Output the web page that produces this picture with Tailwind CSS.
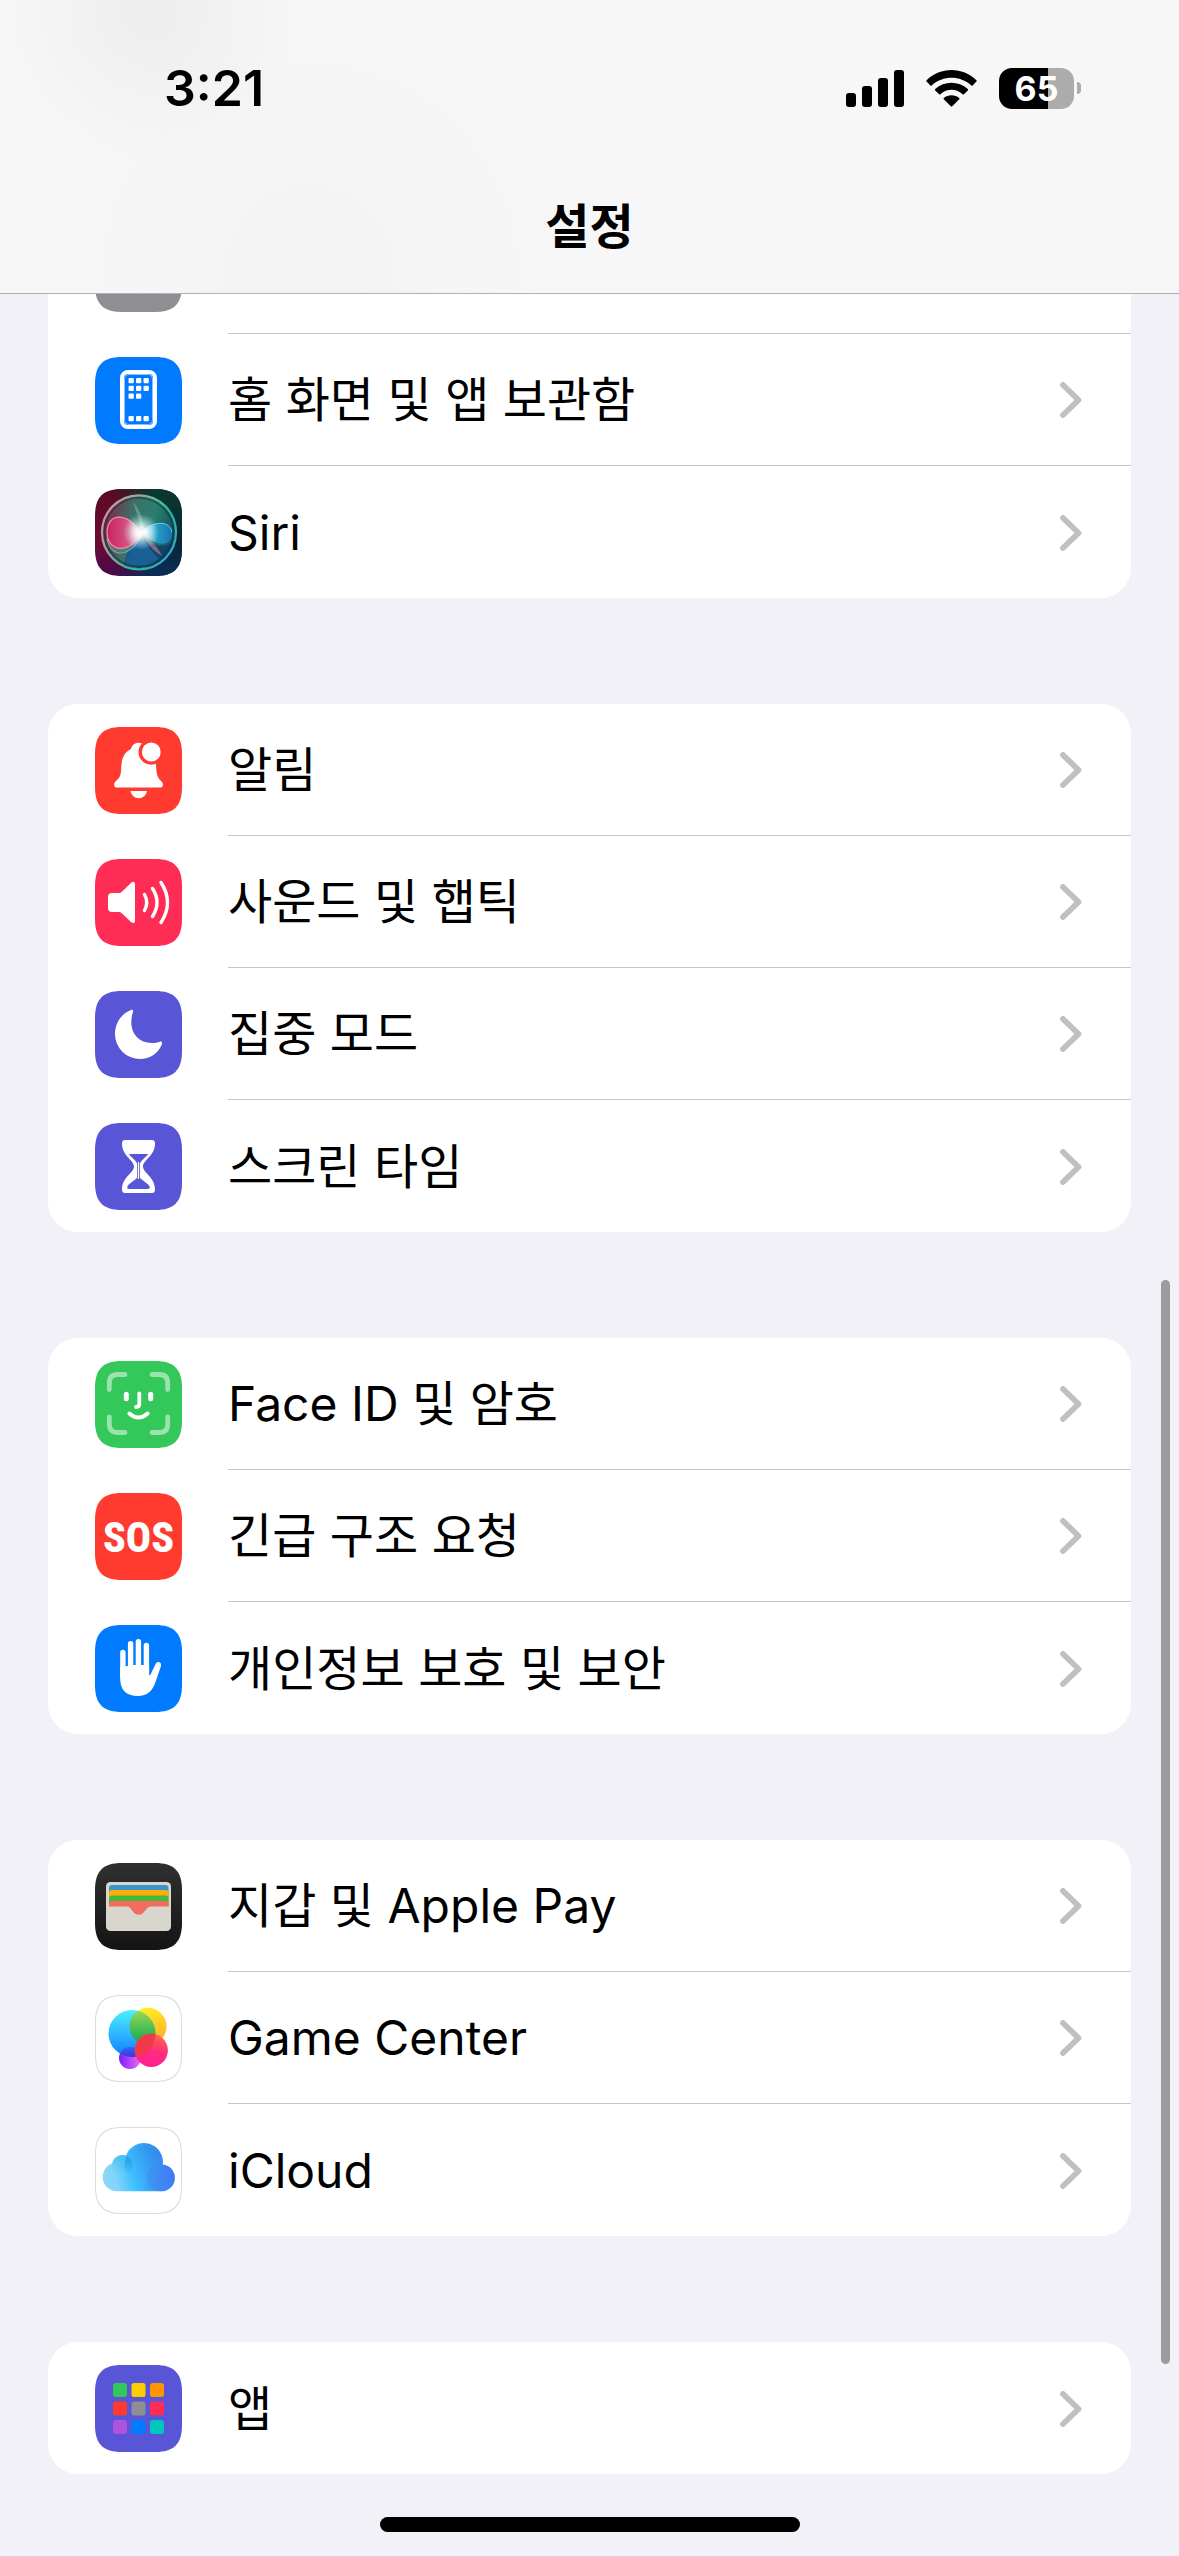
<!DOCTYPE html>
<html lang="ko">

<head>
  <meta charset="UTF-8">
  <meta name="viewport" content="width=device-width, initial-scale=1.0">
  <title>설정</title>
  <script src="https://cdn.jsdelivr.net/npm/@tailwindcss/browser@4"></script>
</head>

<body class="bg-[#f2f1f7] text-black font-['Inter','Noto_Sans_CJK_KR',sans-serif]">

  <!-- shared shapes -->
  <svg class="hidden">
    <symbol id="chevron" viewBox="0 0 22 36">
      <path d="M3 3 L18.5 18 L3 33" fill="none" stroke="#c0c0c2" stroke-width="5.8" stroke-linecap="round" stroke-linejoin="round" />
    </symbol>
    <symbol id="tile" viewBox="0 0 87 87">
      <path d="M27 0 H60 C79 0 87 8 87 27 V60 C87 79 79 87 60 87 H27 C8 87 0 79 0 60 V27 C0 8 8 0 27 0Z" />
    </symbol>
  </svg>

  <header class="sticky top-0 z-10 h-[294px] border-b border-[#b2b2b4] bg-[#f7f7f7] bg-[radial-gradient(circle_at_150px_10px,#ededed,transparent_150px),radial-gradient(circle_at_310px_270px,#f3f3f3,transparent_280px)]">
    <div class="flex items-center justify-between pl-[164px] pr-[98px] pt-[56px]">
      <time class="text-[50px] leading-[64px] font-semibold">3:21</time>
      <div class="flex items-center gap-[22px]">
        <svg class="w-[58px] h-[37px]" viewBox="0 0 58 37">
          <rect x="0" y="23" width="10" height="14" rx="3" />
          <rect x="16" y="16" width="10" height="21" rx="3" />
          <rect x="32" y="8" width="10" height="29" rx="3" />
          <rect x="48" y="0" width="10" height="37" rx="3" />
        </svg>
        <svg class="w-[51px] h-[37px]" viewBox="0 0 51 37">
          <path d="M0.6 10.2 C14.5 -3.4 36.5 -3.4 50.4 10.2 Q51 10.9 50.4 11.6 L46.6 15.4 Q46 16 45.3 15.4 C34 5.2 17 5.2 5.7 15.4 Q5 16 4.4 15.4 L0.6 11.6 Q0 10.9 0.6 10.2Z" />
          <path d="M9.2 19 C18.5 10.6 32.5 10.6 41.8 19 Q42.4 19.7 41.8 20.4 L37.9 24.2 Q37.3 24.8 36.6 24.2 C30 18.4 21 18.4 14.4 24.2 Q13.7 24.8 13.1 24.2 L9.2 20.4 Q8.6 19.7 9.2 19Z" />
          <path d="M17.8 27.9 C22.2 24.3 28.8 24.3 33.2 27.9 Q33.9 28.6 33.2 29.3 L26.2 36.3 Q25.5 37 24.8 36.3 L17.8 29.3 Q17.1 28.6 17.8 27.9Z" />
        </svg>
        <div class="flex items-center gap-[3px]">
          <div class="w-[75px] h-[41px] rounded-[13px] bg-[linear-gradient(to_right,#000_65%,#acacac_65%)] text-center text-[34px] leading-[41px] font-bold text-white">65</div>
          <div class="w-1 h-3 rounded-r-full bg-[#acacac]"></div>
        </div>
      </div>
    </div>
    <h1 class="mt-[77px] text-center text-[48px] leading-[60px] font-semibold">설정</h1>
  </header>

  <main class="px-12 space-y-[106px] text-[48px] leading-[60px]">

    <ul class="rounded-b-[30px] bg-white">
      <!-- row that is scrolled under the header -->
      <li class="flex h-10 items-end overflow-hidden pl-[47px]">
        <svg class="mb-[22px] size-[87px] shrink-0 fill-[#8e8e93]" viewBox="0 0 87 87"><use href="#tile" /></svg>
        <span class="ml-[46px] h-10 flex-1 border-b border-[#c6c6c8]"></span>
      </li>
      <li>
        <a href="#" class="flex h-[132px] pl-[47px]">
          <svg class="mt-[23px] size-[87px] shrink-0" viewBox="0 0 87 87">
            <use href="#tile" fill="#007aff" />
            <rect x="27" y="15" width="33" height="55" rx="6" fill="none" stroke="#fff" stroke-width="4" />
            <rect x="29.5" y="17.5" width="28" height="50" rx="4" fill="none" stroke="#8cc3ff" stroke-width="1" />
            <g fill="#fff">
              <rect x="33.5" y="21" width="5.3" height="5.3" rx="1" />
              <rect x="41" y="21" width="5.3" height="5.3" rx="1" />
              <rect x="48.5" y="21" width="5.3" height="5.3" rx="1" />
              <rect x="33.5" y="28.7" width="5.3" height="5.3" rx="1" />
              <rect x="41" y="28.7" width="5.3" height="5.3" rx="1" />
              <rect x="48.5" y="28.7" width="5.3" height="5.3" rx="1" />
              <rect x="33.5" y="36.4" width="5.3" height="5.3" rx="1" />
              <rect x="41" y="36.4" width="5.3" height="5.3" rx="1" />
              <rect x="33.5" y="59" width="5.3" height="5.3" rx="1" />
              <rect x="41" y="59" width="5.3" height="5.3" rx="1" />
              <rect x="48.5" y="59" width="5.3" height="5.3" rx="1" />
            </g>
          </svg>
          <span class="ml-[46px] flex flex-1 items-center justify-between border-b border-[#c6c6c8] pt-px pr-[49px]">
            홈 화면 및 앱 보관함
            <svg class="w-[22px] h-9"><use href="#chevron" /></svg>
          </span>
        </a>
      </li>
      <li>
        <a href="#" class="flex h-[132px] pl-[47px]">
          <svg class="mt-[23px] size-[87px] shrink-0" viewBox="0 0 87 87">
            <defs>
              <linearGradient id="siriLeft" x1="0" y1="0" x2="0" y2="1">
                <stop offset="0" stop-color="#5a0a24" />
                <stop offset=".6" stop-color="#6d0a35" />
                <stop offset="1" stop-color="#4a0a4c" />
              </linearGradient>
              <linearGradient id="siriRight" x1="0" y1="0" x2="0" y2="1">
                <stop offset="0" stop-color="#0a3a30" />
                <stop offset=".55" stop-color="#07272f" />
                <stop offset="1" stop-color="#0a2d58" />
              </linearGradient>
              <linearGradient id="siriFade" x1="0" y1="0" x2="1" y2="0">
                <stop offset=".2" stop-color="#000" />
                <stop offset=".65" stop-color="#fff" />
              </linearGradient>
              <mask id="siriMask"><rect width="87" height="87" fill="url(#siriFade)" /></mask>
              <linearGradient id="siriOrb" x1="0" y1=".4" x2="1" y2=".6">
                <stop offset="0" stop-color="#7d2a45" />
                <stop offset=".35" stop-color="#3d6f68" />
                <stop offset=".65" stop-color="#2c7f70" />
                <stop offset="1" stop-color="#0f5058" />
              </linearGradient>
              <linearGradient id="siriRing" x1="0" y1=".2" x2="1" y2=".8">
                <stop offset="0" stop-color="#d8929c" />
                <stop offset=".45" stop-color="#6cb8a0" />
                <stop offset=".7" stop-color="#25b99a" />
                <stop offset="1" stop-color="#3aa5e0" />
              </linearGradient>
              <linearGradient id="siriPink" x1="0" y1="0" x2="1" y2="0">
                <stop offset="0" stop-color="#cf1f5f" />
                <stop offset=".6" stop-color="#e3507f" />
                <stop offset="1" stop-color="#fff" />
              </linearGradient>
              <linearGradient id="siriBlue" x1="0" y1="0" x2="1" y2="0">
                <stop offset="0" stop-color="#d8ffff" />
                <stop offset=".5" stop-color="#259fce" />
                <stop offset="1" stop-color="#1878c4" />
              </linearGradient>
              <radialGradient id="siriGlow">
                <stop offset="0" stop-color="#fff" />
                <stop offset=".28" stop-color="#fff" stop-opacity=".85" />
                <stop offset="1" stop-color="#bff" stop-opacity="0" />
              </radialGradient>
            </defs>
            <use href="#tile" fill="url(#siriLeft)" />
            <g mask="url(#siriMask)"><use href="#tile" fill="url(#siriRight)" /></g>
            <circle cx="44" cy="43.3" r="36" fill="url(#siriOrb)" />
            <path d="M46 46 C36 54 32 64 29 75 A35 35 0 0 0 78 54 C66 60 56 56 46 46Z" fill="#0e3a70" opacity=".75" />
            <path d="M46 44 C38 56 32 64 30 75 C44 80 58 76 64 70 C56 62 50 54 46 44Z" fill="#1b70ad" opacity=".6" />
            <path d="M46 44 C36 24 14 22 12 44 C11 66 34 72 48 45Z" fill="#5fb0a8" opacity=".35" />
            <path d="M46 44 C34 25 12 20 12 44 C12 63 34 66 48 45Z" fill="url(#siriPink)" opacity=".92" />
            <path d="M46 44 C34 24 13 22 12 43 C12 63 34 66 47 45" fill="none" stroke="#ff86aa" stroke-width="1.2" />
            <path d="M12 50 C16 69 34 70 48 45" fill="none" stroke="#8fc4cf" stroke-width="1.2" opacity=".7" />
            <path d="M47 43 C56 33 74 30 77 43 C78 59 60 58 47 44Z" fill="url(#siriBlue)" opacity=".9" />
            <path d="M47 43 C56 33 74 30 77 43" fill="none" stroke="#5fd8e8" stroke-width="1" />
            <path d="M47 44 C54 50 62 56 67 67 C58 62 52 54 47 44Z" fill="#d4879c" opacity=".55" />
            <path d="M38 13 C46 22 50 34 48 44 C44 34 42 24 38 13Z" fill="#bfe8dc" opacity=".3" />
            <circle cx="44" cy="43.3" r="34.5" fill="none" stroke="#082c30" stroke-width="2" opacity=".45" />
            <circle cx="44" cy="43.3" r="37" fill="none" stroke="url(#siriRing)" stroke-width="2.2" />
            <circle cx="46" cy="43" r="18" fill="url(#siriGlow)" />
          </svg>
          <span class="ml-[46px] flex flex-1 items-center justify-between pt-px pr-[49px]">
            Siri
            <svg class="w-[22px] h-9"><use href="#chevron" /></svg>
          </span>
        </a>
      </li>
    </ul>

    <ul class="rounded-[30px] bg-white">
      <li>
        <a href="#" class="flex h-[132px] pl-[47px]">
          <svg class="mt-[23px] size-[87px] shrink-0" viewBox="0 0 87 87">
            <use href="#tile" fill="#ff3b30" />
            <path d="M22 60.6 C19 60.6 18 57 20.5 54.5 C24 51 25.5 50 26 44 C26.5 33 27.5 26 36 22 C37 18 40 15.8 43.5 15.8 C46 15.8 49 17 51 20 L61 37 C61.3 48 62.5 50.5 66.5 54.5 C69 57 68 60.6 65 60.6Z" fill="#fff" />
            <circle cx="56.3" cy="25" r="12.8" fill="#ff3b30" />
            <circle cx="56.3" cy="25" r="9.4" fill="#fff" />
            <path d="M35.5 64 H52 C51 68.5 48 71.2 43.7 71.2 C39.5 71.2 36.5 68.5 35.5 64Z" fill="#fff" />
          </svg>
          <span class="ml-[46px] flex flex-1 items-center justify-between border-b border-[#c6c6c8] pt-px pr-[49px]">
            알림
            <svg class="w-[22px] h-9"><use href="#chevron" /></svg>
          </span>
        </a>
      </li>
      <li>
        <a href="#" class="flex h-[132px] pl-[47px]">
          <svg class="mt-[23px] size-[87px] shrink-0" viewBox="0 0 87 87">
            <use href="#tile" fill="#ff2d55" />
            <path d="M17 34 H24 Q25.5 34 26.5 33 L36 24 Q38 22.4 39 23 Q40 23.5 40 25 V62 Q40 63.5 39 64 Q38 64.4 36 63 L26.5 54 Q25.5 53 24 53 H17 Q13 53 13 49 V38 Q13 34 17 34Z" fill="#fff" />
            <path d="M49.5 35.5 Q54 43.5 49.5 51.5 M57.5 29.5 Q66.5 43.5 57.5 57.5 M66 23.5 Q79 43.5 66 63.5" fill="none" stroke="#fff" stroke-width="3.4" stroke-linecap="round" />
          </svg>
          <span class="ml-[46px] flex flex-1 items-center justify-between border-b border-[#c6c6c8] pt-px pr-[49px]">
            사운드 및 햅틱
            <svg class="w-[22px] h-9"><use href="#chevron" /></svg>
          </span>
        </a>
      </li>
      <li>
        <a href="#" class="flex h-[132px] pl-[47px]">
          <svg class="mt-[23px] size-[87px] shrink-0" viewBox="0 0 87 87">
            <use href="#tile" fill="#5856d6" />
            <path d="M36 19 C37.5 18.5 38.5 19.5 38 21 C32.5 38 41 52 57 52 C60 52 62.5 51.5 65 50.7 C66.5 50.3 67.5 51.5 67 53 C63.5 62 55 68 45 68 A25 25 0 0 1 20 43 C20 32 26.5 22.5 36 19Z" fill="#fff" />
          </svg>
          <span class="ml-[46px] flex flex-1 items-center justify-between border-b border-[#c6c6c8] pt-px pr-[49px]">
            집중 모드
            <svg class="w-[22px] h-9"><use href="#chevron" /></svg>
          </span>
        </a>
      </li>
      <li>
        <a href="#" class="flex h-[132px] pl-[47px]">
          <svg class="mt-[23px] size-[87px] shrink-0" viewBox="0 0 87 87">
            <use href="#tile" fill="#5856d6" />
            <path d="M30 17 H57 Q60 17 60 20.5 C60 33 48 37 48 43.5 C48 50 60 54 60 66.5 Q60 70 57 70 H30 Q27 70 27 66.5 C27 54 39 50 39 43.5 C39 37 27 33 27 20.5 Q27 17 30 17Z" fill="#fff" />
            <path d="M34 31 H53 C50.5 35 46 37 44.9 41 V54.5 C46 57 53.5 60 54.8 64 Q55 66 53 66 H34 Q32 66 32.2 64 C33.5 60 41 57 42.1 54.5 V41 C41 37 36.5 35 34 31Z" fill="#5856d6" />
            <path d="M43.5 39 V56" stroke="#fff" stroke-width="1.2" />
          </svg>
          <span class="ml-[46px] flex flex-1 items-center justify-between pt-px pr-[49px]">
            스크린 타임
            <svg class="w-[22px] h-9"><use href="#chevron" /></svg>
          </span>
        </a>
      </li>
    </ul>

    <ul class="rounded-[30px] bg-white">
      <li>
        <a href="#" class="flex h-[132px] pl-[47px]">
          <svg class="mt-[23px] size-[87px] shrink-0" viewBox="0 0 87 87">
            <use href="#tile" fill="#34c759" />
            <path d="M14.3 28.5 V22 Q14.3 13.5 22.5 13.5 H30 M57 13.5 H64.5 Q72.7 13.5 72.7 22 V28.5 M72.7 56 V63 Q72.7 71.5 64.5 71.5 H57 M30 71.5 H22.5 Q14.3 71.5 14.3 63 V56" fill="none" stroke="#9ae3ac" stroke-width="4.8" stroke-linecap="round" />
            <path d="M31.3 33.3 V37.7 M55.7 33.3 V37.7" stroke="#fff" stroke-width="5" stroke-linecap="round" />
            <path d="M44.3 32.5 V43 Q44.3 46 41 46 M34.3 52.5 Q43.5 60.5 52.7 52.5" fill="none" stroke="#fff" stroke-width="3.8" stroke-linecap="round" />
          </svg>
          <span class="ml-[46px] flex flex-1 items-center justify-between border-b border-[#c6c6c8] pt-px pr-[49px]">
            Face ID 및 암호
            <svg class="w-[22px] h-9"><use href="#chevron" /></svg>
          </span>
        </a>
      </li>
      <li>
        <a href="#" class="flex h-[132px] pl-[47px]">
          <svg class="mt-[23px] size-[87px] shrink-0" viewBox="0 0 87 87">
            <use href="#tile" fill="#ff3b30" />
            <text x="43.5" y="59" text-anchor="middle" fill="#fff" class="font-['Liberation_Sans_Narrow','Roboto_Condensed','Roboto',sans-serif] text-[42px] font-extrabold">SOS</text>
          </svg>
          <span class="ml-[46px] flex flex-1 items-center justify-between border-b border-[#c6c6c8] pt-px pr-[49px]">
            긴급 구조 요청
            <svg class="w-[22px] h-9"><use href="#chevron" /></svg>
          </span>
        </a>
      </li>
      <li>
        <a href="#" class="flex h-[132px] pl-[47px]">
          <svg class="mt-[23px] size-[87px] shrink-0" viewBox="0 0 87 87">
            <use href="#tile" fill="#007aff" />
            <g fill="#fff">
              <rect x="25.2" y="24.8" width="5.4" height="30" rx="2.7" />
              <rect x="32.9" y="16" width="5.4" height="38" rx="2.7" />
              <rect x="40.7" y="14" width="5.4" height="38" rx="2.7" />
              <rect x="48.7" y="17.8" width="5.4" height="36" rx="2.7" />
              <path d="M25.2 42 L32.9 41 L38.3 40 H48.7 L54.1 41 V50.5 L55.3 50 L60.8 38.5 C62.5 35.5 67 37 66 41 L60.5 57 C57.5 66 52 71 43 71 C31 71 25.2 64.5 25.2 54Z" />
            </g>
          </svg>
          <span class="ml-[46px] flex flex-1 items-center justify-between pt-px pr-[49px]">
            개인정보 보호 및 보안
            <svg class="w-[22px] h-9"><use href="#chevron" /></svg>
          </span>
        </a>
      </li>
    </ul>

    <ul class="rounded-[30px] bg-white">
      <li>
        <a href="#" class="flex h-[132px] pl-[47px]">
          <svg class="mt-[23px] size-[87px] shrink-0" viewBox="0 0 87 87">
            <defs>
              <linearGradient id="walletBg" x1="0" y1="0" x2="0" y2="1">
                <stop offset="0" stop-color="#303030" />
                <stop offset="1" stop-color="#141414" />
              </linearGradient>
            </defs>
            <use href="#tile" fill="url(#walletBg)" />
            <rect x="11" y="19" width="65" height="49" rx="4.5" fill="#d9d6cd" />
            <path d="M14 25 Q14 22 17 22 H70.5 Q73.5 22 73.5 25 V43 H14Z" fill="#3a96c9" />
            <path d="M14 30 Q14 27 17 27 H70.5 Q73.5 27 73.5 30 V43 H14Z" fill="#ffad0a" />
            <path d="M14 35.5 Q14 32.6 17 32.6 H70.5 Q73.5 32.6 73.5 35.5 V43 H14Z" fill="#48b839" />
            <path d="M14 41 Q14 38 17 38 H70.5 Q73.5 38 73.5 41 V43.5 H56 C50.5 43.5 50 51.8 43.7 51.8 C37.5 51.8 37 43.5 31.5 43.5 H14Z" fill="#f26d5f" />
          </svg>
          <span class="ml-[46px] flex flex-1 items-center justify-between border-b border-[#c6c6c8] pt-px pr-[49px]">
            지갑 및 Apple Pay
            <svg class="w-[22px] h-9"><use href="#chevron" /></svg>
          </span>
        </a>
      </li>
      <li>
        <a href="#" class="flex h-[132px] pl-[47px]">
          <svg class="mt-[23px] size-[87px] shrink-0" viewBox="0 0 87 87">
            <defs>
              <linearGradient id="gcBlue" x1="0" y1="0" x2="0" y2="1">
                <stop offset="0" stop-color="#4df0ff" />
                <stop offset="1" stop-color="#0f7dff" />
              </linearGradient>
              <linearGradient id="gcYellow" x1="0" y1="0" x2=".3" y2="1">
                <stop offset="0" stop-color="#fff81f" />
                <stop offset="1" stop-color="#ffb02a" />
              </linearGradient>
              <linearGradient id="gcGreen" x1="0" y1="0" x2="0" y2="1">
                <stop offset="0" stop-color="#a5dd55" />
                <stop offset="1" stop-color="#0aa550" />
              </linearGradient>
              <linearGradient id="gcRed" x1=".6" y1="0" x2=".4" y2="1">
                <stop offset="0" stop-color="#ff6a4d" />
                <stop offset=".5" stop-color="#ff2c79" />
                <stop offset="1" stop-color="#ff1f96" />
              </linearGradient>
              <linearGradient id="gcPurple" x1="0" y1="0" x2="1" y2="0">
                <stop offset="0" stop-color="#7a1fff" />
                <stop offset="1" stop-color="#ef6bf0" />
              </linearGradient>
              <linearGradient id="gcIndigo" x1="0" y1="0" x2="0" y2="1">
                <stop offset="0" stop-color="#2f66f5" />
                <stop offset=".5" stop-color="#4a2ad8" />
              </linearGradient>
              <clipPath id="gcBlueClip"><circle cx="37" cy="38.5" r="23.5" /></clipPath>
            </defs>
            <use href="#tile" fill="#dcdcdd" />
            <path d="M27 1 H60 C78 1 86 9 86 27 V60 C86 78 78 86 60 86 H27 C9 86 1 78 1 60 V27 C1 9 9 1 27 1Z" fill="#fff" />
            <circle cx="53" cy="31.3" r="18.5" fill="url(#gcYellow)" />
            <circle cx="35" cy="63" r="11" fill="url(#gcPurple)" />
            <circle cx="37" cy="38.5" r="23.5" fill="url(#gcBlue)" />
            <g clip-path="url(#gcBlueClip)">
              <circle cx="53" cy="31.3" r="18.5" fill="url(#gcGreen)" />
              <circle cx="35" cy="63" r="11" fill="url(#gcIndigo)" />
            </g>
            <circle cx="56.3" cy="55.3" r="16.6" fill="url(#gcRed)" />
            <g clip-path="url(#gcBlueClip)"><circle cx="56.3" cy="55.3" r="16.6" fill="#f03a4a" /></g>
          </svg>
          <span class="ml-[46px] flex flex-1 items-center justify-between border-b border-[#c6c6c8] pt-px pr-[49px]">
            Game Center
            <svg class="w-[22px] h-9"><use href="#chevron" /></svg>
          </span>
        </a>
      </li>
      <li>
        <a href="#" class="flex h-[132px] pl-[47px]">
          <svg class="mt-[23px] size-[87px] shrink-0" viewBox="0 0 87 87">
            <defs>
              <linearGradient id="cloud" gradientUnits="userSpaceOnUse" x1="8" y1="58" x2="79" y2="40">
                <stop offset="0" stop-color="#8fd8f6" />
                <stop offset=".2" stop-color="#7fd3f9" />
                <stop offset=".42" stop-color="#3fc0ff" />
                <stop offset=".7" stop-color="#3498f0" />
                <stop offset="1" stop-color="#3d76f5" />
              </linearGradient>
              <linearGradient id="cloudTop" x1="0" y1=".8" x2=".9" y2="0">
                <stop offset="0" stop-color="#3fc0ff" stop-opacity="0" />
                <stop offset="1" stop-color="#2f86ea" stop-opacity=".8" />
              </linearGradient>
              <linearGradient id="cloudSmall" x1="0" y1="0" x2="0" y2="1">
                <stop offset=".2" stop-color="#36b8ea" stop-opacity=".4" />
                <stop offset=".9" stop-color="#36b8ea" stop-opacity="0" />
              </linearGradient>
              <linearGradient id="cloudOverlap" x1="0" y1="0" x2="0" y2="1">
                <stop offset=".2" stop-color="#1fa0e6" stop-opacity=".8" />
                <stop offset=".9" stop-color="#1fa0e6" stop-opacity="0" />
              </linearGradient>
              <clipPath id="cloudBig"><circle cx="48.7" cy="38" r="19" /></clipPath>
            </defs>
            <use href="#tile" fill="#dcdcdd" />
            <path d="M27 1 H60 C78 1 86 9 86 27 V60 C86 78 78 86 60 86 H27 C9 86 1 78 1 60 V27 C1 9 9 1 27 1Z" fill="#fff" />
            <path d="M22.2 64.3 A14.3 14.3 0 0 1 17 36.6 A10.8 10.8 0 0 1 31 28.6 A19 19 0 0 1 67.7 37.6 A13.4 13.4 0 0 1 65.3 64.3Z" fill="url(#cloud)" />
            <circle cx="48.7" cy="38" r="19" fill="url(#cloudTop)" />
            <circle cx="27.3" cy="38.5" r="10.5" fill="url(#cloudSmall)" />
            <g clip-path="url(#cloudBig)"><circle cx="27.3" cy="38.5" r="10.5" fill="url(#cloudOverlap)" /></g>
            <circle cx="65.3" cy="50.9" r="13.3" fill="#4a7ff8" opacity=".4" />
          </svg>
          <span class="ml-[46px] flex flex-1 items-center justify-between pt-px pr-[49px]">
            iCloud
            <svg class="w-[22px] h-9"><use href="#chevron" /></svg>
          </span>
        </a>
      </li>
    </ul>

    <ul class="rounded-[30px] bg-white">
      <li>
        <a href="#" class="flex h-[132px] pl-[47px]">
          <svg class="mt-[23px] size-[87px] shrink-0" viewBox="0 0 87 87">
            <use href="#tile" fill="#5856d6" />
            <rect x="18" y="18" width="14" height="14" rx="2.5" fill="#34c759" />
            <rect x="36.5" y="18" width="14" height="14" rx="2.5" fill="#ffcc00" />
            <rect x="55" y="18" width="14" height="14" rx="2.5" fill="#ff9500" />
            <rect x="18" y="36.5" width="14" height="14" rx="2.5" fill="#ff3b30" />
            <rect x="36.5" y="36.5" width="14" height="14" rx="2.5" fill="#8e8e93" />
            <rect x="55" y="36.5" width="14" height="14" rx="2.5" fill="#ff2d55" />
            <rect x="18" y="55" width="14" height="14" rx="2.5" fill="#af52de" />
            <rect x="36.5" y="55" width="14" height="14" rx="2.5" fill="#007aff" />
            <rect x="55" y="55" width="14" height="14" rx="2.5" fill="#00c7be" />
          </svg>
          <span class="ml-[46px] flex flex-1 items-center justify-between pt-px pr-[49px]">
            앱
            <svg class="w-[22px] h-9"><use href="#chevron" /></svg>
          </span>
        </a>
      </li>
    </ul>
  </main>

  <!-- home indicator -->
  <footer class="flex justify-center pt-[43px] pb-6">
    <div class="h-[15px] w-[420px] rounded-full bg-black"></div>
  </footer>

  <!-- scroll thumb -->
  <div class="fixed right-[9px] top-[1280px] bottom-[192px] w-[9px] rounded-full bg-[#9c9c9e]"></div>

</body>

</html>
